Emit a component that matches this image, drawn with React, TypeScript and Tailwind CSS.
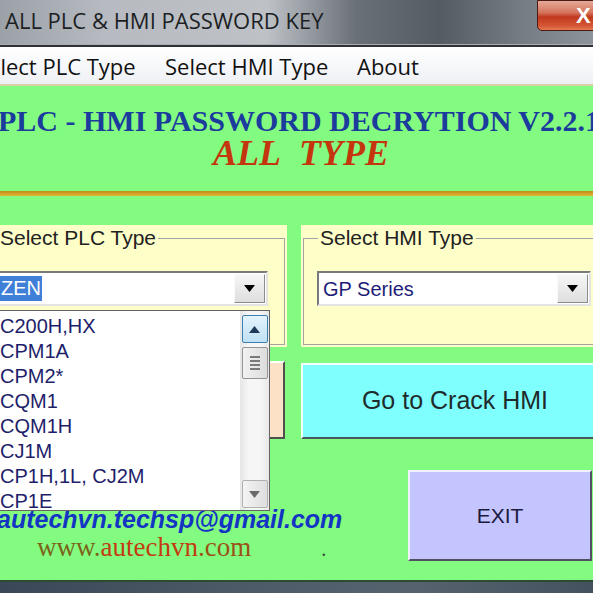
import React from 'react';

const plcItems = ['C200H,HX', 'CPM1A', 'CPM2*', 'CQM1', 'CQM1H', 'CJ1M', 'CP1H,1L, CJ2M', 'CP1E'];

const sans = "font-['Liberation_Sans',Arial,sans-serif]";
const serif = "font-['Liberation_Serif','Times_New_Roman',serif]";
const ui = "font-['Open_Sans','Noto_Sans',sans-serif]";

const Arrow: React.FC<{ up?: boolean; color?: string }> = ({ up, color = '#000' }) => (
  <svg width="11" height="7" viewBox="0 0 11 7">
    <polygon points={up ? '0,7 11,7 5.5,0' : '0,0 11,0 5.5,7'} fill={color} />
  </svg>
);

// combobox with sunken border and the little drop button
const Combo: React.FC<{ className: string; children: React.ReactNode }> = ({ className, children }) => (
  <div
    className={`h-[35px] flex items-center bg-white border-2 border-t-[#7a7a7a] border-l-[#7a7a7a] border-b-[#e4e4e4] border-r-[#e4e4e4] ${className}`}
  >
    <div className="flex-1 flex items-center overflow-hidden whitespace-nowrap">{children}</div>
    <div className="w-[31px] h-[29px] mr-[1px] flex items-center justify-center bg-[linear-gradient(#f6f6f6,#dedede)] border border-t-[#fafafa] border-l-[#fafafa] border-b-[#8c8c8c] border-r-[#8c8c8c]">
      <Arrow />
    </div>
  </div>
);

const GroupBox: React.FC<{ legend: string; legendMl: string; children: React.ReactNode }> = ({ legend, legendMl, children }) => (
  <div className="h-[122px] bg-[#fefec9] pt-[1px] px-[2px]">
    <fieldset className="h-[119px] border border-[#a3a3a3]">
      <legend className={`${legendMl} px-[2px] text-[21px] leading-[24px] text-[#222] ${sans}`}>{legend}</legend>
      {children}
    </fieldset>
  </div>
);

const App: React.FC = () => {
  return (
    <div className="w-[593px] h-[593px] overflow-hidden flex flex-col bg-[#82fb80]">
      {/* Title bar */}
      <div className="h-[44px] flex justify-between items-start bg-[linear-gradient(90deg,#9ca1a8_0%,#b7bbc1_18%,#bec2c7_45%,#6a7078_60%,#555b63_74%,#767c84_88%,#8d939a_100%)]">
        <span className={`pl-[5px] pt-[5px] text-[22px] leading-[30px] text-[#1c1f24] whitespace-nowrap ${ui}`}>
          ALL PLC &amp; HMI PASSWORD KEY
        </span>
        <div className="w-[66px] h-[31px] -mr-[10px] rounded-bl-[5px] border border-[#4a1a14] bg-[linear-gradient(#e6aa9a_0%,#d4745c_40%,#c0381e_55%,#d45634_85%,#e67a50_100%)] pl-[38px] flex items-center">
          <span className={`text-white text-[22px] font-bold leading-none ${sans}`}>X</span>
        </div>
      </div>
      <div className="h-[1px] bg-[#a9adb3]" />
      <div className="h-[2px] bg-[#2e3236]" />

      {/* Menu bar */}
      <div className={`h-[39px] flex items-center pt-[2px] bg-[linear-gradient(#ffffff,#eef0f4)] border-b-2 border-[#d9d1a6] text-[22px] text-[#111] whitespace-nowrap ${ui}`}>
        <span className="-ml-[24px] w-[189px] shrink-0">Select PLC Type</span>
        <span className="w-[192px] shrink-0">Select HMI Type</span>
        <span>About</span>
      </div>

      {/* Main form */}
      <div className="flex-1 relative flex flex-col">
        <div className={`pt-[20px] -ml-[2px] whitespace-nowrap text-[30px] leading-[30px] font-bold text-[#1b3c9c] ${serif}`}>
          PLC - HMI PASSWORD DECRYTION V2.2.1
        </div>
        <div className={`pl-[9px] text-center text-[36px] leading-[34px] font-bold italic text-[#c4360e] ${serif}`}>
          ALL&nbsp;&nbsp;TYPE
        </div>
        <div className="mt-[21px] h-[5px] bg-[linear-gradient(#c08c14,#e4b63a)]" />

        {/* Group boxes */}
        <div className="mt-[29px] flex gap-[14px] -ml-[10px] -mr-[12px]">
          <div className="w-[297px]">
            <GroupBox legend="Select PLC Type" legendMl="ml-[5px]">
              <Combo className="mt-[21px] w-[275px]">
                <span className={`ml-[5px] px-[1px] bg-[#3f7fd8] text-white text-[20px] leading-[25px] ${sans}`}>ZEN</span>
              </Combo>
            </GroupBox>
          </div>
          <div className="flex-1">
            <GroupBox legend="Select HMI Type" legendMl="ml-[14px]">
              <Combo className="mt-[21px] ml-[13px] w-[274px]">
                <span className={`pl-[4px] text-[20px] text-[#1e1e78] ${sans}`}>GP Series</span>
              </Combo>
            </GroupBox>
          </div>
        </div>

        {/* Crack buttons */}
        <div className="mt-[14px] flex items-start -ml-[10px] -mr-[12px]">
          <div className={`w-[295px] h-[78px] flex items-center justify-center bg-[#fde1c6] border-2 border-t-[#fff] border-l-[#fff] border-b-[#505050] border-r-[#505050] text-[25px] text-[#222] ${sans}`}>
            Go to Crack PLC
          </div>
          <div className={`ml-[16px] mt-[2px] flex-1 h-[76px] flex items-center justify-center pl-[4px] bg-[#80ffff] border-2 border-t-[#f4ffff] border-l-[#f4ffff] border-b-[#4a5a5a] border-r-[#4a5a5a] text-[25px] text-[#1f2b2b] ${sans}`}>
            Go to Crack HMI
          </div>
        </div>

        {/* Contact + exit */}
        <div className="mt-[31px] flex">
          <div className="flex-1 whitespace-nowrap">
            <div className={`pt-[36px] -ml-[3px] text-[25px] leading-[26px] font-bold italic text-[#1434c4] ${sans}`}>
              autechvn.techsp@gmail.com
            </div>
            <div className={`pl-[37px] text-[27px] leading-[30px] ${serif}`}>
              <span className="text-[#7a6418]">www.</span>
              <span className="text-[#c23c10]">autechvn</span>
              <span className="text-[#9a5014]">.com</span>
              <span className="ml-[70px] text-[#3a4a3a] text-[20px]">.</span>
            </div>
          </div>
          <div className={`w-[184px] h-[91px] mr-[1px] flex items-center justify-center bg-[#c4c4fe] border-2 border-t-[#f0f0ff] border-l-[#f0f0ff] border-b-[#505060] border-r-[#505060] text-[21px] text-[#1a1a40] ${sans}`}>
            EXIT
          </div>
        </div>

        {/* Open drop-down list of the PLC combo */}
        <div className="absolute left-[-10px] top-[224px] w-[280px] h-[201px] bg-white border border-[#646464] overflow-hidden">
          <div className={`pl-[9px] pt-[3px] text-[20px] leading-[25px] text-[#1e1e6a] ${sans}`}>
            {plcItems.map((item) => (
              <div key={item} className="whitespace-nowrap">{item}</div>
            ))}
          </div>
          <div className="absolute right-0 top-0 bottom-0 w-[29px] bg-[linear-gradient(90deg,#e6e6e6,#f6f6f6_30%,#f6f6f6_70%,#e8e8e8)] flex flex-col items-center">
            <div className="mt-[4px] w-[26px] h-[28px] rounded-[2px] border border-[#3c7fb1] bg-[linear-gradient(#e4f3fc,#bfe1f6)] flex items-center justify-center">
              <Arrow up color="#1e3a5a" />
            </div>
            <div className="mt-[4px] w-[26px] h-[32px] rounded-[2px] border border-[#959595] bg-[linear-gradient(90deg,#f2f2f2,#dcdcdc)] flex flex-col items-center justify-center gap-[2px]">
              <div className="w-[10px] h-[2px] bg-[#7a7a7a]" />
              <div className="w-[10px] h-[2px] bg-[#7a7a7a]" />
              <div className="w-[10px] h-[2px] bg-[#7a7a7a]" />
              <div className="w-[10px] h-[2px] bg-[#7a7a7a]" />
            </div>
            <div className="mt-auto mb-[2px] w-[26px] h-[28px] rounded-[2px] border border-[#b0b0b0] bg-[linear-gradient(90deg,#f4f4f4,#dedede)] flex items-center justify-center">
              <Arrow color="#6a6a6a" />
            </div>
          </div>
        </div>
      </div>

      {/* Window bottom frame */}
      <div className="h-[2px] bg-[#2d4a32]" />
      <div className="h-[11px] bg-[linear-gradient(90deg,#3a4756,#4c5a68_40%,#56636f_70%,#44515e)]" />
    </div>
  );
};

export default App;
